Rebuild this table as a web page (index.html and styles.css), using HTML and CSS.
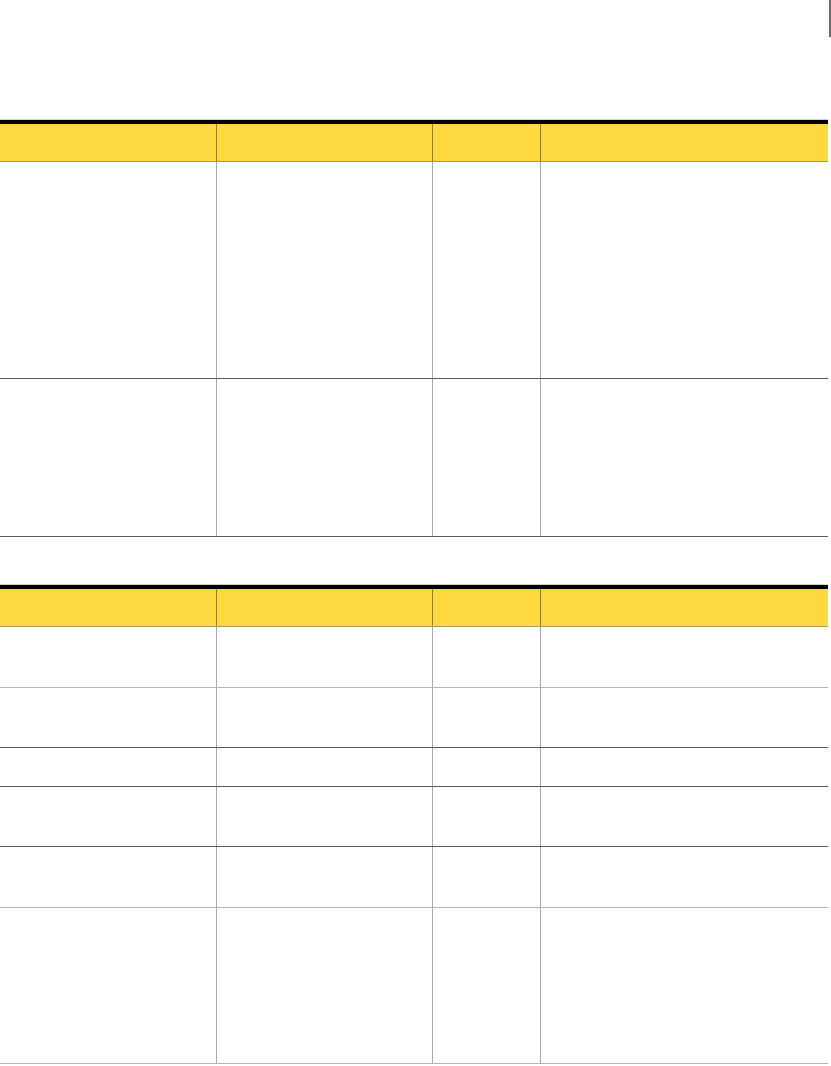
FILE: index.html
```html
<!DOCTYPE html>
<html lang="en">
<head>
<meta charset="utf-8">
<title>Tables</title>
<link rel="stylesheet" href="styles.css">
</head>
<body>
<div class="page">
  <div class="topbar"><span class="marker"></span></div>

  <div class="tbl tbl-first">
    <div class="row head"><div class="cell"></div><div class="cell"></div><div class="cell"></div><div class="cell"></div></div>
    <div class="row dark h217"><div class="cell"></div><div class="cell"></div><div class="cell"></div><div class="cell"></div></div>
    <div class="row dark h158"><div class="cell"></div><div class="cell"></div><div class="cell"></div><div class="cell"></div></div>
  </div>

  <div class="tbl tbl-second">
    <div class="row head"><div class="cell"></div><div class="cell"></div><div class="cell"></div><div class="cell"></div></div>
    <div class="row light h61"><div class="cell"></div><div class="cell"></div><div class="cell"></div><div class="cell"></div></div>
    <div class="row dark h60"><div class="cell"></div><div class="cell"></div><div class="cell"></div><div class="cell"></div></div>
    <div class="row dark h39"><div class="cell"></div><div class="cell"></div><div class="cell"></div><div class="cell"></div></div>
    <div class="row dark h60"><div class="cell"></div><div class="cell"></div><div class="cell"></div><div class="cell"></div></div>
    <div class="row light h61"><div class="cell"></div><div class="cell"></div><div class="cell"></div><div class="cell"></div></div>
    <div class="row light h156"><div class="cell"></div><div class="cell"></div><div class="cell"></div><div class="cell"></div></div>
  </div>
</div>
</body>
</html>
```
FILE: styles.css
```css
html, body {
  margin: 0;
  padding: 0;
  background: #ffffff;
  font-family: "Liberation Sans", Arial, sans-serif;
}

.page {
  width: 831px;
}

.topbar {
  height: 119px;
  display: flex;
  justify-content: flex-end;
  align-items: flex-start;
}

.marker {
  display: block;
  width: 2px;
  height: 37px;
  background: #6a6a6a;
}

.tbl {
  width: 828px;
  border-top: 1px solid #d0d0d0;
}

.tbl-second {
  margin-top: 47px;
}

.row {
  display: grid;
  grid-template-columns: 216px 216px 108px 288px;
  box-sizing: border-box;
}

.row .cell + .cell {
  border-left: 1px solid #a8a8a8;
}

.head {
  height: 42px;
  border-top: 4px solid #000000;
  background: #fdd83f;
  border-bottom: 1px solid #a49a6a;
}

.head .cell + .cell {
  border-left-color: #8a7e45;
}

.dark {
  border-bottom: 1px solid #5a5a5a;
}

.light {
  border-bottom: 1px solid #b4b4b4;
}

.h217 { height: 217px; }
.h158 { height: 158px; }
.h61 { height: 61px; }
.h60 { height: 60px; }
.h39 { height: 39px; }
.h156 { height: 156px; }
```
